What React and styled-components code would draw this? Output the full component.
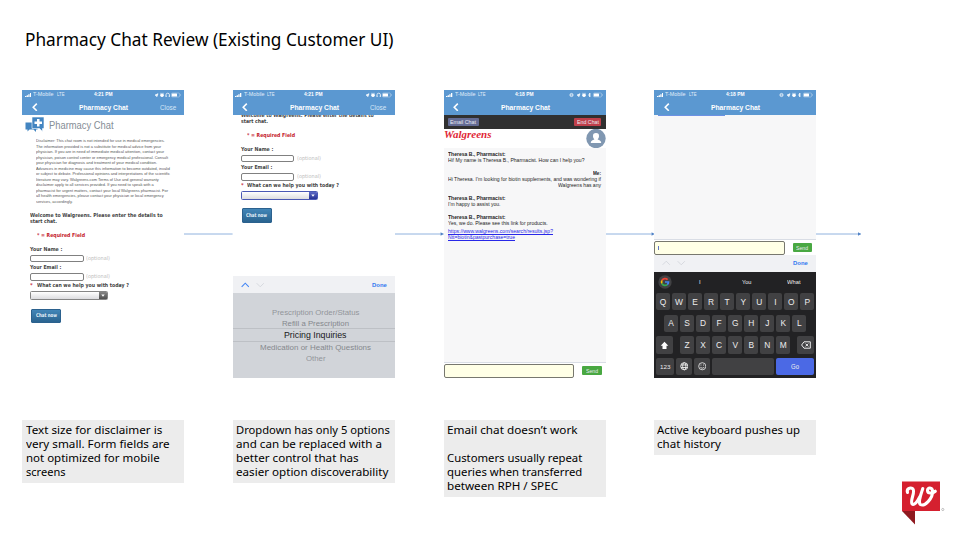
import React, { useLayoutEffect, useRef, useState } from "react";
import styled, { createGlobalStyle } from "styled-components";

const Global = createGlobalStyle`
  * { box-sizing: border-box; }
  body { margin: 0; background: #fff; overflow: hidden; }
`;

const sans = `"Liberation Sans", Arial, sans-serif`;
const deck = `"Noto Sans", "Open Sans", sans-serif`;
const form = `"DejaVu Sans", Verdana, sans-serif`;

/* ---------- text that fills an exact measure ---------- */
const Measure = styled.span`
  display: flex;
  flex: none;
  width: ${(p) => p.$w}px;
  white-space: pre;
`;
const Ink = styled.span`
  flex: none;
  transform-origin: 0 50%;
`;
function Fit({ w, children }) {
  const ref = useRef(null);
  const [scale, setScale] = useState(1);
  useLayoutEffect(() => {
    const natural = ref.current.offsetWidth ? ref.current.getBoundingClientRect().width : w;
    setScale(w / natural);
  }, [w]);
  return (
    <Measure $w={w}>
      <Ink ref={ref} style={{ transform: `scaleX(${scale})` }}>{children}</Ink>
    </Measure>
  );
}

/* ---------- slide ---------- */
const Slide = styled.main`
  width: 960px;
  height: 540px;
  display: grid;
  grid-template-rows: 90.3px 287.7px 42px 1fr;
  background: #fff;
  font-family: ${sans};
`;
const Title = styled.h1`
  margin: 0;
  padding: 27px 0 0 25.2px;
  font: 400 18.2px/25px ${deck};
  color: #000;
`;
const Screens = styled.section`
  display: flex;
  padding-left: 22.4px;
`;
const Arrow = styled.svg`
  flex: none;
  display: block;
  width: ${(p) => p.$w}px;
  height: 6px;
  margin-top: 141px;
`;
const Connector = ({ w, head }) => (
  <Arrow $w={w} viewBox={`0 0 ${w} 6`}>
    <path d={`M0 3H${w}`} stroke="#85a9da" strokeWidth="0.9" />
    {head && <path d={`M${w - 3} 1.3L${w} 3l-3 1.7z`} fill="#4f82c6" />}
  </Arrow>
);
const Footer = styled.section`
  grid-row: 4;
  display: flex;
  align-items: flex-start;
  gap: 48.6px;
  padding-left: 22.4px;
`;
const Caption = styled.div`
  flex: none;
  width: 162px;
  padding: 3.5px 0 3.5px 3.3px;
  background: #ececec;
  font: 400 11.6px/14px ${deck};
  color: #000;
`;
const CaptionLine = styled.div`
  display: flex;
  height: 14px;
`;
const Brand = styled.svg`
  flex: none;
  display: block;
  width: 44px;
  height: 46px;
  margin: 60px 0 0 36.3px;
`;

/* ---------- phone ---------- */
const Phone = styled.article`
  flex: none;
  width: 162px;
  height: 287.7px;
  display: flex;
  flex-direction: column;
  overflow: hidden;
  background: #fff;
`;
const Header = styled.header`
  flex: none;
  height: 25px;
  background: #5b98d1;
  color: #fff;
`;
const Status = styled.div`
  display: grid;
  grid-template-columns: 1fr auto 1fr;
  align-items: center;
  height: 9px;
  padding: 0 3px 0 2.5px;
  font-size: 5.4px;
  line-height: 9px;
`;
const Carrier = styled.div`
  display: flex;
  align-items: center;
  gap: 2px;
  color: #e2eefa;
`;
const Network = styled.span`
  margin-left: 1px;
`;
const Group = styled.div`
  display: flex;
  align-items: center;
  justify-content: ${(p) => (p.$end ? "flex-end" : "flex-start")};
  gap: ${(p) => p.$gap || 0}px;
`;
const Nav = styled.div`
  display: grid;
  grid-template-columns: 1fr auto 1fr;
  align-items: center;
  height: 16px;
  padding: 0 8.3px 0 9.5px;
  font-size: 7.8px;
`;
const Strong = styled.strong`
  font-weight: 700;
`;
const NavAction = styled.span`
  display: flex;
  justify-content: flex-end;
  color: #d5e6f7;
`;
const Glyph = styled.svg`
  flex: none;
  display: block;
  width: ${(p) => p.$w}px;
  height: ${(p) => p.$h}px;
`;
const Chevron = ({ dir, w, h, color, sw }) => {
  const d = { left: "M8 1L2 7l6 6", up: "M1 8L7 2l6 6", down: "M1 2l6 6 6-6" }[dir];
  return (
    <Glyph $w={w} $h={h} viewBox={dir === "left" ? "0 0 10 14" : "0 0 14 10"} fill="none">
      <path d={d} stroke={color} strokeWidth={sw} />
    </Glyph>
  );
};
const StatusIcons = ({ chat }) => (
  <Glyph $w={chat ? 34 : 28} $h={6} viewBox={chat ? "0 0 34 6" : "6 0 28 6"} fill="none" stroke="#fff" strokeWidth="0.7">
    {chat && <><circle cx="2.5" cy="3" r="1.6" /><path d="M1 3h3" /></>}
    <path d="M8 3.2l3-1.5-1.2 3-.4-1.4z" fill="#fff" />
    <circle cx="15" cy="3.2" r="1.5" fill="#fff" />
    <path d="M13.4 1.4l.7-.5M16.6 1.4l-.7-.5" />
    {chat ? <path d="M19.5 2l2 2-1 1V1l1 1-2 2" /> : <path d="M18.9 4.8V3a1.8 1.8 0 013.6 0v1.8M19.3 3.6v1.2M22.1 3.6v1.2" />}
    <rect x="24.4" y="1" width="8.2" height="4" rx="1" strokeOpacity="0.6" strokeWidth="0.5" />
    <rect x="24.8" y="1.4" width="5.2" height="3.2" rx="0.5" fill="#fff" stroke="none" />
    <path d="M33.5 2.4v1.2" strokeOpacity="0.6" />
  </Glyph>
);
const PhoneHeader = ({ time, close, chat }) => (
  <Header>
    <Status>
      <Carrier>
        <Glyph $w={6.5} $h={4.5} viewBox="0 0 13 9" fill="#fff">
          <path d="M0 6h2.600v3H0zM3.300 4.500h2.600V9H3.300zM6.600 2.500h2.600V9H6.600zM10 0h2.600v9H10z" />
        </Glyph>
        <Fit w={20.5}>T-Mobile</Fit>
        <Network><Fit w={7.5}>LTE</Fit></Network>
      </Carrier>
      <Strong><Fit w={18.5}>{time}</Fit></Strong>
      <Group $end><StatusIcons chat={chat} /></Group>
    </Status>
    <Nav>
      <Chevron dir="left" w={6} h={8.4} color="#fff" sw={2.6} />
      <Strong><Fit w={49}>Pharmacy Chat</Fit></Strong>
      <NavAction>{close && <Fit w={16.3}>Close</Fit>}</NavAction>
    </Nav>
  </Header>
);

/* ---------- pre-chat form ---------- */
const Intro = styled.div`
  display: flex;
  align-items: center;
  flex: none;
  gap: 4.4px;
  height: 20px;
  padding-left: 3px;
  font-size: 10.4px;
  color: #858d96;
`;
const Disclaimer = styled.div`
  flex: none;
  height: 75px;
  padding: 2.8px 0 0 13.6px;
  font-size: 4.4px;
  line-height: 5.5px;
  color: #555;
`;
const TextLine = styled.div`
  display: flex;
  height: 5.5px;
`;
const FormArea = styled.div`
  flex: none;
  padding-left: 7.7px;
  margin-top: ${(p) => p.$top || 0}px;
  font: 700 5.4px/7px ${form};
  color: #444;
`;
const Viewport = styled.div`
  flex: 1;
  overflow: hidden;
  display: flex;
  flex-direction: column;
`;
const FormRow = styled.div`
  display: flex;
  align-items: center;
  height: ${(p) => p.$h}px;
  padding-left: ${(p) => p.$inset || 0}px;
  gap: ${(p) => p.$gap || 2.5}px;
  color: ${(p) => (p.$red ? "#c4202b" : "inherit")};
`;
const Field = styled.div`
  width: 53.7px;
  height: 7.5px;
  border: 1px solid #808080;
  border-radius: 2px;
  background: #fff;
`;
const Optional = styled.span`
  font-weight: 400;
  color: #bdbdbd;
`;
const Red = styled.span`
  color: #c4202b;
`;
const Select = styled.div`
  display: flex;
  justify-content: flex-end;
  width: 77.5px;
  height: 9px;
  border: 0.8px solid ${(p) => (p.$active ? "#4a58b4" : "#858585")};
  border-radius: 1.5px;
  background: linear-gradient(#fff, #dcdcdf);
  overflow: hidden;
`;
const SelectButton = styled.span`
  display: flex;
  align-items: center;
  justify-content: center;
  width: 8px;
  background: ${(p) => (p.$active ? "linear-gradient(#5c69c5,#263294)" : "linear-gradient(#858585,#505050)")};
`;
const Submit = styled.button`
  display: flex;
  align-items: center;
  justify-content: center;
  width: 30px;
  height: 14.5px;
  padding: 0;
  border: 0.8px solid #2b618e;
  border-radius: 1px;
  background: linear-gradient(#4286b8, #2a638f);
  color: #e8f3fb;
  font: 700 5.2px/7px ${form};
  margin: 8.2px 0 0 1px;
`;
const ChatForm = ({ top, active }) => (
  <FormArea $top={top}>
    <FormRow $h={6.4}><Fit w={132.7}>Welcome to Walgreens. Please enter the details to</Fit></FormRow>
    <FormRow $h={6.4}><Fit w={27}>start chat.</Fit></FormRow>
    <FormRow $h={21} $inset={6.5} $red><Fit w={48}>* = Required Field</Fit></FormRow>
    <FormRow $h={8.5}><Fit w={32.3}>Your Name :</Fit></FormRow>
    <FormRow $h={8.8}><Field /><Optional><Fit w={24}>(optional)</Fit></Optional></FormRow>
    <FormRow $h={9.4}><Fit w={31.3}>Your Email :</Fit></FormRow>
    <FormRow $h={9}><Field /><Optional><Fit w={24}>(optional)</Fit></Optional></FormRow>
    <FormRow $h={9} $gap={4}><Red><Fit w={2.7}>*</Fit></Red><Fit w={92}>What can we help you with today ?</Fit></FormRow>
    <FormRow $h={10}>
      <Select $active={active}>
        <SelectButton $active={active}>
          <Glyph $w={4} $h={3} viewBox="0 0 4 3"><path d="M0.3 0.4h3.4L2 2.8z" fill="#fff" /></Glyph>
        </SelectButton>
      </Select>
    </FormRow>
    <Submit><Fit w={21}>Chat now</Fit></Submit>
  </FormArea>
);

/* ---------- accessory bar and picker ---------- */
const Accessory = styled.div`
  flex: none;
  display: flex;
  align-items: center;
  gap: 6.5px;
  height: ${(p) => p.$h}px;
  padding: 0 8px;
  background: #f0f1f4;
  font-size: 6px;
  font-weight: 700;
  color: #3478f0;
`;
const Push = styled.span`
  margin-left: auto;
`;
const Picker = styled.div`
  flex: none;
  height: 84.5px;
  display: flex;
  flex-direction: column;
  align-items: center;
  padding-top: 14px;
  background: #d1d4d9;
`;
const Option = styled.div`
  display: flex;
  align-items: center;
  justify-content: center;
  width: 100%;
  height: ${(p) => p.$h}px;
  padding-left: 3px;
  font-size: ${(p) => p.$size}px;
  color: ${(p) => p.$color};
  ${(p) => p.$selected && "border: solid #bdc0c5; border-width: 0.8px 0; "}
`;

/* ---------- live chat ---------- */
const Toolbar = styled.div`
  flex: none;
  display: flex;
  justify-content: space-between;
  height: 13.5px;
  padding: 2.3px 4.3px 0 4.5px;
  background: #303030;
`;
const Chip = styled.button`
  display: flex;
  align-items: center;
  justify-content: center;
  width: ${(p) => p.$w}px;
  height: ${(p) => p.$h || 8}px;
  padding: 0;
  border: 0;
  border-radius: 1px;
  background: ${(p) => p.$bg};
  color: #e9eaf3;
  font: 400 5.6px/8px ${sans};
`;
const LogoBar = styled.div`
  flex: none;
  display: flex;
  justify-content: space-between;
  height: 19px;
`;
const Wordmark = styled.div`
  height: 12px;
  font: italic 700 10.5px/12px "Liberation Serif", serif;
  color: #df2636;
`;
const Messages = styled.div`
  flex: 1;
  padding: ${(p) => p.$top || 0}px 4.5px 0 4px;
  background: #f7f7f8;
  font-size: 5.6px;
  line-height: 5.95px;
  color: #1d1d1d;
`;
const Message = styled.div`
  display: flex;
  flex-direction: column;
  align-items: ${(p) => (p.$mine ? "flex-end" : "flex-start")};
  margin-bottom: ${(p) => p.$gap}px;
`;
const Link = styled.a`
  color: #2828e8;
  text-decoration: underline;
  text-decoration-thickness: 0.6px;
`;
const LinkLines = styled.div`
  padding-top: 0.6px;
  line-height: 6.3px;
`;
const Compose = styled.div`
  flex: none;
  display: flex;
  align-items: center;
  gap: 8px;
  height: 15.6px;
  border-top: 1px solid #d9dde5;
  background: #fff;
`;
const Entry = styled.div`
  width: 130.5px;
  height: 14px;
  border: 1px solid #77776e;
  border-radius: 2px;
  background: #ffffe6;
  padding: 4px 0 0 3px;
`;
const Caret = styled.i`
  display: block;
  width: 1px;
  height: 4.5px;
  background: #6075c5;
`;
const Loading = styled.div`
  width: 67px;
  height: 1px;
  background: #6d91e4;
`;

/* ---------- keyboard ---------- */
const Keyboard = styled.div`
  flex: none;
  height: 106px;
  display: flex;
  flex-direction: column;
  background: #222224;
  color: #ededee;
`;
const Suggestions = styled.div`
  flex: none;
  display: grid;
  grid-template-columns: 21.5px 46.5px 46.5px 1fr;
  align-items: center;
  height: 21px;
  font-size: 5.8px;
`;
const Suggestion = styled.span`
  display: flex;
  justify-content: center;
  padding-left: 2px;
`;
const KeyRow = styled.div`
  flex: none;
  display: flex;
  justify-content: ${(p) => (p.$spread ? "space-between" : "center")};
  gap: 2.05px;
  height: 17.4px;
  margin-bottom: 4.3px;
  padding: 0 2px;
`;
const Key = styled.span`
  flex: none;
  display: flex;
  align-items: center;
  justify-content: center;
  width: ${(p) => p.$w || 14}px;
  height: 17.4px;
  border-radius: 2px;
  background: ${(p) => p.$bg || "#414143"};
  font-size: ${(p) => p.$size || 8.4}px;
`;
const keys = (letters) => letters.split("").map((k) => <Key key={k}>{k}</Key>);

const DISCLAIMER = [
  ["Disclaimer: This chat room is not intended for use in medical emergencies.", 128.7],
  ["The information provided is not a substitute for medical advice from your", 125],
  ["physician. If you are in need of immediate medical attention, contact your", 128],
  ["physician, poison control center or emergency medical professional. Consult", 132],
  ["your physician for diagnosis and treatment of your medical condition.", 121],
  ["Advances in medicine may cause this information to become outdated, invalid", 134],
  ["or subject to debate. Professional opinions and interpretations of the scientific", 134],
  ["literature may vary. Walgreens.com Terms of Use and general warranty", 122.7],
  ["disclaimer apply to all services provided. If you need to speak with a", 117.7],
  ["pharmacist for urgent matters, contact your local Walgreens pharmacist. For", 132],
  ["all health emergencies, please contact your physician or local emergency", 127.7],
  ["services, accordingly.", 36.7],
];
const CAPTIONS = [
  [["Text size for disclaimer is", 136.3], ["very small. Form fields are", 143.7], ["not optimized for mobile", 133.7], ["screens", 39.5]],
  [["Dropdown has only 5 options", 153.8], ["and can be replaced with a", 146], ["better control that has", 122.7], ["easier option discoverability", 152.5]],
  [["Email chat doesn’t work", 130.5], null, ["Customers usually repeat", 135.3], ["queries when transferred", 135.3], ["between RPH / SPEC", 111]],
  [["Active keyboard pushes up", 143], ["chat history", 64]],
];

export default function App() {
  return (
    <>
      <Global />
      <Slide>
        <Title><Fit w={368.5}>Pharmacy Chat Review (Existing Customer UI)</Fit></Title>
        <Screens>
          <Phone>
            <PhoneHeader time="4:21 PM" close />
            <Intro>
              <Glyph $w={19.5} $h={16} viewBox="0 0 39 32">
                <path d="M1 11h24v14h-3v5l-5-5h-8l-4 4v-4H1z" fill="#4385c1" />
                <path d="M14 0h24v23h-3v6l-6-6H14z" fill="#4385c1" stroke="#fff" strokeWidth="1.2" />
                <path d="M24 4h5v5h5v5h-5v5h-5v-5h-5V9h5z" fill="#fff" />
              </Glyph>
              <Fit w={64.5}>Pharmacy Chat</Fit>
            </Intro>
            <Disclaimer>
              {DISCLAIMER.map(([t, w]) => <TextLine key={t}><Fit w={w}>{t}</Fit></TextLine>)}
            </Disclaimer>
            <ChatForm top={1.6} />
          </Phone>
          <Connector w={48.6} />
          <Phone>
            <PhoneHeader time="4:21 PM" close />
            <Viewport><ChatForm top={-3.5} active /></Viewport>
            <Accessory $h={17.5}>
              <Chevron dir="up" w={8.5} h={6} color="#4285f4" sw={1.8} />
              <Chevron dir="down" w={8.5} h={6} color="#cfd2d8" sw={1.3} />
              <Push><Fit w={14.8}>Done</Fit></Push>
            </Accessory>
            <Picker>
              <Option $h={10.5} $size={6.3} $color="#92959a"><Fit w={87.5}>Prescription Order/Status</Fit></Option>
              <Option $h={10.3} $size={7.4} $color="#85888d"><Fit w={67}>Refill a Prescription</Fit></Option>
              <Option $h={14.2} $size={8.6} $color="#17181a" $selected><Fit w={62.5}>Pricing Inquiries</Fit></Option>
              <Option $h={11} $size={7.4} $color="#85888d"><Fit w={111}>Medication or Health Questions</Fit></Option>
              <Option $h={10} $size={6.3} $color="#92959a"><Fit w={19.5}>Other</Fit></Option>
            </Picker>
          </Phone>
          <Connector w={48.6} head />
          <Phone>
            <PhoneHeader time="4:18 PM" chat />
            <Toolbar>
              <Chip $w={30.8} $bg="#636b94"><Fit w={26}>Email Chat</Fit></Chip>
              <Chip $w={27} $bg="#bf3f4a"><Fit w={22}>End Chat</Fit></Chip>
            </Toolbar>
            <LogoBar>
              <Wordmark><Fit w={47.5}>Walgreens</Fit></Wordmark>
              <Glyph $w={20} $h={19.2} viewBox="0 0 20 19.2">
                <circle cx="10" cy="9.5" r="9.7" fill="#8097b1" />
                <path d="M10 4a3 3 0 013 3.2c0 1.500-.7 2.500-1.400 3 .4.7 3.600 1 3.600 3.800H4.800c0-2.800 3.200-3.100 3.600-3.800C7.700 9.700 7 8.700 7 7.200A3 3 0 0110 4z" fill="#fff" />
              </Glyph>
            </LogoBar>
            <Messages $top={4}>
              <Message $gap={7.4}>
                <Strong><Fit w={57.5}>Theresa B., Pharmacist:</Fit></Strong>
                <Fit w={136.5}>Hi! My name is Theresa B., Pharmacist. How can I help you?</Fit>
              </Message>
              <Message $mine $gap={7.3}>
                <Strong><Fit w={8}>Me:</Fit></Strong>
                <Fit w={153}>Hi Theresa. I’m looking for biotin supplements, and was wondering if</Fit>
                <Fit w={43}>Walgreens has any</Fit>
              </Message>
              <Message $gap={7.2}>
                <Strong><Fit w={57.5}>Theresa B., Pharmacist:</Fit></Strong>
                <Fit w={52.5}>I’m happy to assist you.</Fit>
              </Message>
              <Message $gap={0}>
                <Strong><Fit w={57.5}>Theresa B., Pharmacist:</Fit></Strong>
                <Fit w={99.7}>Yes, we do. Please see this link for products.</Fit>
                <LinkLines>
                  <Fit w={105}><Link>https://www.walgreens.com/search/results.jsp?</Link></Fit>
                  <Fit w={67}><Link>Ntt=biotin&amp;pastpurchase=true</Link></Fit>
                </LinkLines>
              </Message>
            </Messages>
            <Compose>
              <Entry />
              <Chip $w={19.5} $h={9.5} $bg="#49a842"><Fit w={12}>Send</Fit></Chip>
            </Compose>
          </Phone>
          <Connector w={48.6} head />
          <Phone>
            <PhoneHeader time="4:18 PM" chat />
            <Messages><Loading /></Messages>
            <Compose>
              <Entry><Caret /></Entry>
              <Chip $w={19.5} $h={9.5} $bg="#49a842"><Fit w={12}>Send</Fit></Chip>
            </Compose>
            <Accessory $h={17}>
              <Chevron dir="up" w={8.5} h={6} color="#cfd2d8" sw={1.3} />
              <Chevron dir="down" w={8.5} h={6} color="#cfd2d8" sw={1.3} />
              <Push><Fit w={14.8}>Done</Fit></Push>
            </Accessory>
            <Keyboard>
              <Suggestions>
                <Group $end>
                  <Glyph $w={17.5} $h={14} viewBox="0 0 17.5 14" fill="none" strokeWidth="1.7">
                    <circle cx="7" cy="7" r="6.7" fill="#414143" />
                    <path d="M9.600 4.700A3.500 3.500 0 003.900 5.500" stroke="#ea4335" />
                    <path d="M3.900 5.500a3.500 3.500 0 000 3" stroke="#fbbc05" />
                    <path d="M3.900 8.500a3.500 3.500 0 005.400 1.100" stroke="#34a853" />
                    <path d="M7 7h3.500a3.500 3.500 0 01-1.200 2.600" stroke="#4285f4" />
                  </Glyph>
                </Group>
                <Suggestion>I</Suggestion>
                <Suggestion><Fit w={9.5}>You</Fit></Suggestion>
                <Suggestion><Fit w={13.5}>What</Fit></Suggestion>
              </Suggestions>
              <KeyRow>{keys("QWERTYUIOP")}</KeyRow>
              <KeyRow>{keys("ASDFGHJKL")}</KeyRow>
              <KeyRow $spread>
                <Key $w={17}>
                  <Glyph $w={9} $h={9} viewBox="0 0 9 9"><path d="M4.500.8L8.300 4.700H6.500v3.200h-4V4.700H.7z" fill="#fff" /></Glyph>
                </Key>
                <Group $gap={2.05}>{keys("ZXCVBNM")}</Group>
                <Key $w={17}>
                  <Glyph $w={10} $h={8} viewBox="0 0 10 8" fill="none" stroke="#fff" strokeWidth="0.9">
                    <path d="M3 .8h6.300v6.400H3L.6 4zM4.500 2.600l2.800 2.800M7.300 2.600L4.500 5.400" />
                  </Glyph>
                </Key>
              </KeyRow>
              <KeyRow $spread>
                <Key $w={17.5} $size={6.2}><Fit w={10.5}>123</Fit></Key>
                <Key $w={15.8}>
                  <Glyph $w={8.5} $h={8.5} viewBox="0 0 10 10" fill="none" stroke="#e8e8e8" strokeWidth="1.1">
                    <circle cx="5" cy="5" r="4.200" /><ellipse cx="5" cy="5" rx="1.900" ry="4.200" />
                    <path d="M1.200 3.500h7.600M1.200 6.500h7.600" />
                  </Glyph>
                </Key>
                <Key $w={15.8}>
                  <Glyph $w={8.5} $h={8.5} viewBox="0 0 10 10" fill="none" stroke="#e8e8e8" strokeWidth="1">
                    <circle cx="5" cy="5" r="4.200" /><path d="M2.800 5.800c.8 2 3.600 2 4.400 0M3.500 3v1.200M6.500 3v1.200" />
                  </Glyph>
                </Key>
                <Key $w={61.5} />
                <Key $w={38} $bg="#4b69e5" $size={6.6}><Fit w={8}>Go</Fit></Key>
              </KeyRow>
            </Keyboard>
          </Phone>
          <Connector w={45} head />
        </Screens>
        <Footer>
          {CAPTIONS.map((lines, i) => (
            <Caption key={i}>
              {lines.map((l, j) => <CaptionLine key={j}>{l && <Fit w={l[1]}>{l[0]}</Fit>}</CaptionLine>)}
            </Caption>
          ))}
          <Brand viewBox="0 0 44 46">
            <path d="M1 31h13v13.500z" fill="#8f1a20" />
            <path d="M1 1.500h38V31H1z" fill="#d5202f" />
            <path
              d="M6.500 12.500C5.300 9 9 6.800 11.800 8.800C14.800 11.500 8.800 20.500 11 23.800C13.500 26.800 19.500 18 21.800 8.500C19.600 15.500 16.800 22.500 19.400 24.500C23.500 27 31.800 18.500 31.600 11.500C31.300 6.800 26.500 7.200 26.500 10.600C26.800 14 31.500 13.600 34.300 11.200"
              fill="none" stroke="#fff" strokeWidth="3.100" strokeLinecap="round" strokeLinejoin="round"
            />
            <circle cx="41.800" cy="29.500" r="1.100" fill="none" stroke="#999" strokeWidth="0.600" />
          </Brand>
        </Footer>
      </Slide>
    </>
  );
}
